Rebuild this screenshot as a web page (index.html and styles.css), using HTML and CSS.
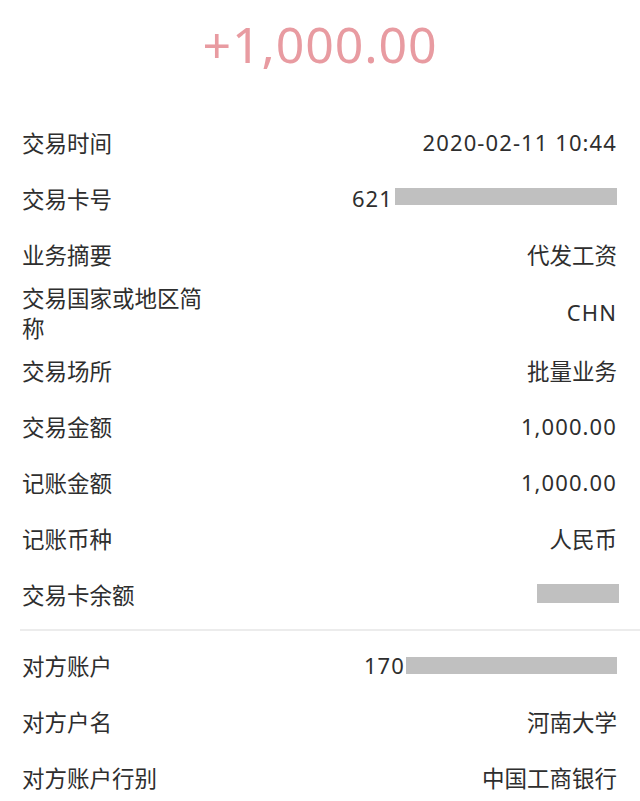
FILE: index.html
```
<!DOCTYPE html>
<html lang="zh-CN">
<head>
<meta charset="utf-8">
<title>交易详情</title>
<link rel="stylesheet" href="styles.css">
</head>
<body>
<div class="page">
  <div class="amount">+1,000.00</div>
  <div class="group">
    <div class="row"><div class="label">交易时间</div><div class="value num">2020-02-11 10:44</div></div>
    <div class="row"><div class="label">交易卡号</div><div class="value num"><span>621</span><span class="mask mask-card"></span></div></div>
    <div class="row"><div class="label">业务摘要</div><div class="value cjk">代发工资</div></div>
    <div class="row"><div class="label wrap">交易国家或地区简称</div><div class="value num">CHN</div></div>
    <div class="row"><div class="label">交易场所</div><div class="value cjk">批量业务</div></div>
    <div class="row"><div class="label">交易金额</div><div class="value num">1,000.00</div></div>
    <div class="row"><div class="label">记账金额</div><div class="value num">1,000.00</div></div>
    <div class="row"><div class="label">记账币种</div><div class="value cjk">人民币</div></div>
    <div class="row"><div class="label">交易卡余额</div><div class="value"><span class="mask mask-balance"></span></div></div>
  </div>
  <div class="divider"></div>
  <div class="group">
    <div class="row"><div class="label">对方账户</div><div class="value num"><span>170</span><span class="mask mask-acct"></span></div></div>
    <div class="row"><div class="label">对方户名</div><div class="value cjk">河南大学</div></div>
    <div class="row"><div class="label">对方账户行别</div><div class="value cjk">中国工商银行</div></div>
  </div>
</div>
</body>
</html>
```
FILE: styles.css
```
html, body {
  margin: 0;
  padding: 0;
  background: #ffffff;
}
body {
  font-family: "Noto Sans", "Noto Sans CJK SC", sans-serif;
  color: #2e2e2e;
}
.page {
  width: 640px;
}
.amount {
  height: 114px;
  box-sizing: border-box;
  padding-top: 12px;
  text-align: center;
  font-size: 50px;
  line-height: 64px;
  color: #e89ba1;
  letter-spacing: 0.9px;
}
.group {
  padding: 0 23px 0 22px;
}
.row {
  display: flex;
  align-items: center;
  justify-content: space-between;
  min-height: 56px;
  font-size: 22px;
  line-height: 30px;
}
.label {
  font-family: "Noto Sans CJK SC", sans-serif;
  font-size: 22.5px;
  flex: 0 0 auto;
}
.label.wrap {
  width: 190px;
}
.value {
  display: flex;
  align-items: center;
}
.value.num {
  letter-spacing: 1.1px;
}
.value.cjk {
  font-family: "Noto Sans CJK SC", sans-serif;
  font-size: 22.5px;
}
.mask {
  display: inline-block;
  background: #c0c0c0;
  height: 17px;
}
.mask-card {
  width: 222px;
  margin-left: 2px;
  margin-top: -4px;
}
.mask-balance {
  width: 82px;
  height: 19px;
  margin-right: -2px;
  margin-top: -2px;
}
.mask-acct {
  width: 211px;
  margin-left: 1px;
}
.divider {
  margin: 7px 0 6px 20px;
  height: 2px;
  background: #ececec;
}
```
